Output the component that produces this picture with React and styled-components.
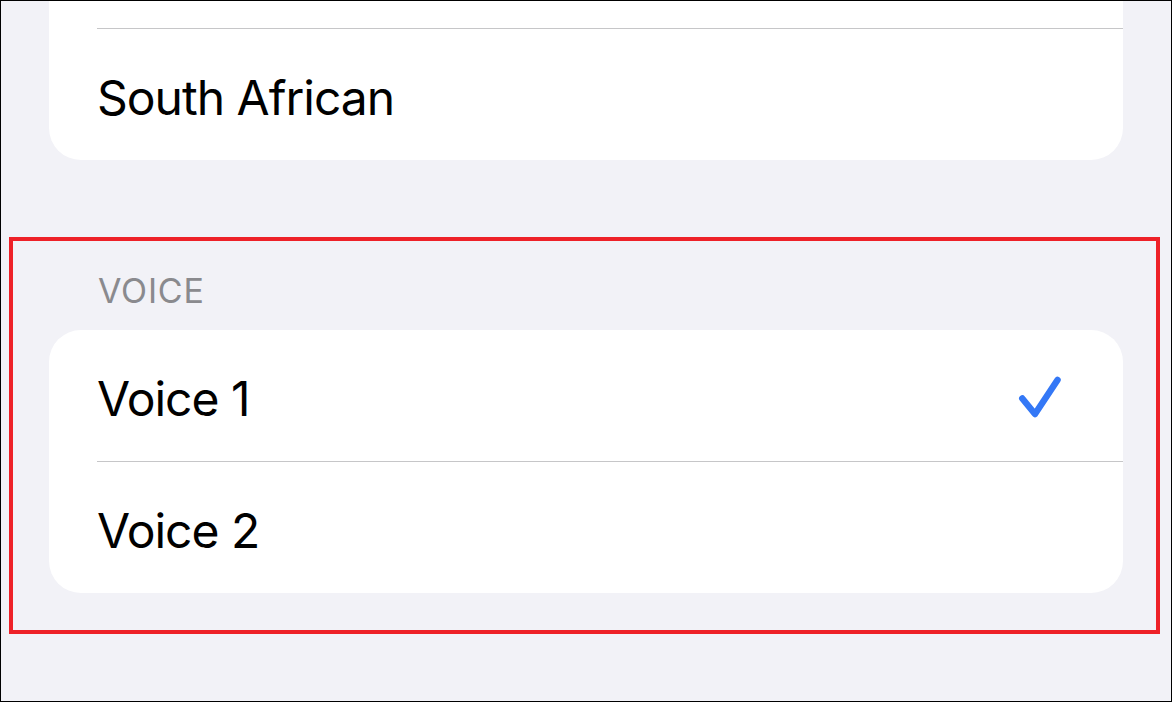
import React from 'react';
import styled, { createGlobalStyle } from 'styled-components';

const GlobalStyle = createGlobalStyle`
    html, body {
        margin: 0;
        padding: 0;
        background: #f2f2f7;
    }
`;

const Frame = styled.div`
    width: 1172px;
    height: 702px;
    box-sizing: border-box;
    border: 1px solid #000;
    background: #f2f2f7;
    overflow: hidden;
    font-family: Inter, 'Noto Sans', sans-serif;
    color: #000;
`;

const Column = styled.div`
    display: flex;
    flex-direction: column;
    padding: 0 48px;
    margin-top: -104px;
`;

const Card = styled.div`
    background: #fff;
    border-radius: 32px;
    overflow: hidden;
`;

const Row = styled.div`
    display: flex;
    align-items: center;
    justify-content: space-between;
    margin-left: 48px;
    padding: 5px 60px 0 0;
    box-sizing: border-box;
    border-top: ${(props) => (props.$first ? 'none' : '1px solid #c6c6c8')};
    height: ${(props) => (props.$first ? '131px' : '132px')};
`;

const Label = styled.span`
    font-size: 48px;
    font-weight: 400;
    letter-spacing: -1px;
`;

const Highlight = styled.section`
    margin: 77px -37px 0 -40px;
    padding: 0 33px 37px 36px;
    border: 4px solid #ee2128;
`;

const SectionHeader = styled.div`
    display: flex;
    align-items: center;
    height: 89px;
    box-sizing: border-box;
    padding: 9px 0 0 49px;
    font-size: 34px;
    color: #8a8a8e;
    letter-spacing: 0.8px;
`;

function Check() {
    return (
        <svg width="46" height="46" viewBox="0 0 46 46">
            <path
                d="M5.3 23.5 L18 39 L40.5 5"
                fill="none"
                stroke="#3478f6"
                strokeWidth="6.5"
                strokeLinecap="round"
                strokeLinejoin="round"
            />
        </svg>
    );
}

export default function App() {
    return (
        <>
            <GlobalStyle />
            <Frame>
                <Column>
                    <Card>
                        <Row $first />
                        <Row>
                            <Label>South African</Label>
                        </Row>
                    </Card>
                    <Highlight>
                        <SectionHeader>VOICE</SectionHeader>
                        <Card>
                            <Row $first>
                                <Label>Voice 1</Label>
                                <Check />
                            </Row>
                            <Row>
                                <Label>Voice 2</Label>
                            </Row>
                        </Card>
                    </Highlight>
                </Column>
            </Frame>
        </>
    );
}
